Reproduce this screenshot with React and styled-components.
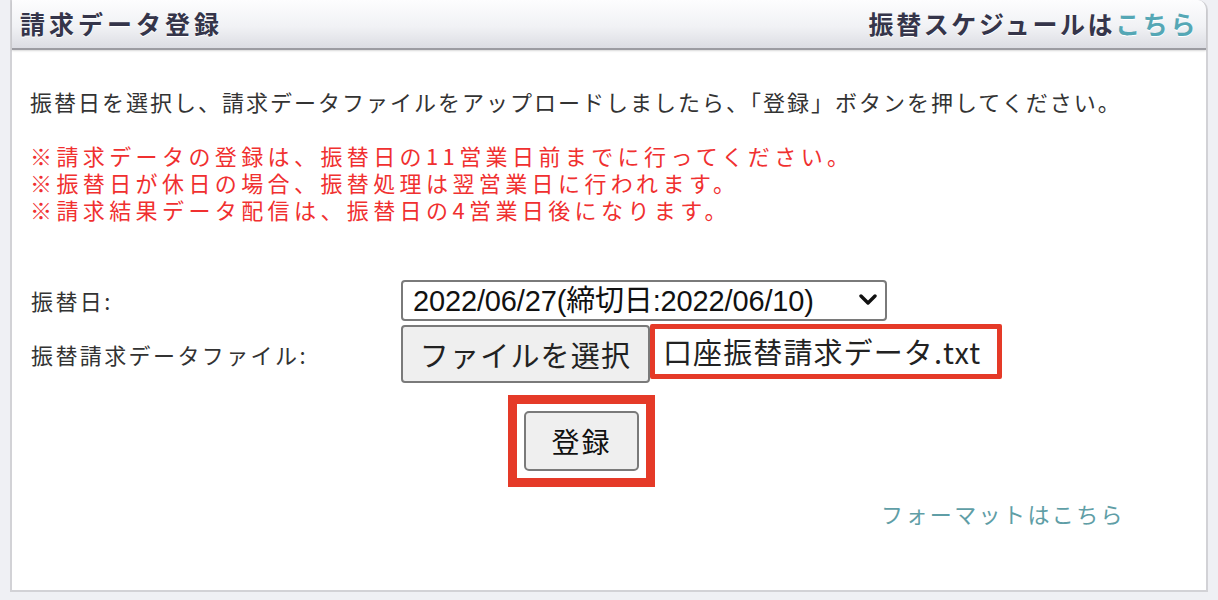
import React, { useState } from "react";
import styled, { createGlobalStyle } from "styled-components";

const GlobalStyle = createGlobalStyle`
  html, body {
    margin: 0;
    padding: 0;
    background: #eff0f4;
  }
  body {
    font-family: "Noto Sans CJK JP", "Liberation Sans", sans-serif;
    color: #333;
  }
`;

const Page = styled.div`
  padding: 0 10px;
  width: 1198px;
`;

const Panel = styled.section`
  background: #fff;
  border: 2px solid #d2d2d6;
  border-top: none;
  border-top-right-radius: 10px;
  height: 592px;
  box-sizing: border-box;
`;

const Header = styled.header`
  display: flex;
  align-items: center;
  justify-content: space-between;
  height: 50px;
  box-sizing: border-box;
  padding: 0 8px 2px 8px;
  background: linear-gradient(#fdfdfe 0%, #f1f2f5 55%, #dcdde3 100%);
  border-bottom: 2px solid #9c9ca2;
  border-top-right-radius: 10px;
  box-shadow: 0 1px 2px rgba(0, 0, 0, 0.15);
  font-size: 25px;
  font-weight: bold;
  color: #35354a;
  text-shadow: 0 1px 0 #fff;
`;

const Title = styled.h2`
  margin: 0;
  font-size: inherit;
  letter-spacing: 4px;
`;

const HeaderLink = styled.a`
  color: #35354a;
  text-decoration: none;
  letter-spacing: 2.6px;
  span {
    color: #55a7b5;
  }
`;

const Body = styled.div`
  padding: 38px 18px 0 18px;
  font-size: 22px;
  line-height: 27px;
`;

const Lead = styled.p`
  margin: 0 0 27px 0;
  color: #333;
  letter-spacing: 2px;
`;

const Notes = styled.div`
  color: #f03030;
  letter-spacing: 4.4px;
`;

const Form = styled.div`
  display: grid;
  grid-template-columns: 371px auto;
  row-gap: 4px;
  align-items: center;
  margin-top: 57px;
  letter-spacing: 2.4px;
`;

const Label = styled.label`
  color: #333;
  padding-left: 1px;
`;

const SelectWrap = styled.div`
  position: relative;
  width: 486px;
`;

const Select = styled.select`
  appearance: none;
  width: 100%;
  height: 41px;
  box-sizing: border-box;
  padding: 0 0 0 10px;
  border: 2px solid #7a7a7a;
  border-radius: 4px;
  background: #fff;
  color: #111;
  font-family: "Liberation Sans", "Noto Sans CJK JP", sans-serif;
  font-size: 29px;
  letter-spacing: -0.15px;
`;

const Chevron = styled.svg`
  position: absolute;
  right: 10px;
  top: 13px;
  width: 18px;
  height: 14px;
  pointer-events: none;
`;

const FileRow = styled.div`
  display: flex;
  align-items: flex-start;
`;

const FileButton = styled.button`
  width: 249px;
  height: 58px;
  box-sizing: border-box;
  border: 2px solid #7a7a7a;
  border-radius: 4px;
  background: #efefef;
  color: #222;
  font-family: "Noto Sans CJK JP", sans-serif;
  font-size: 29px;
  letter-spacing: 1.2px;
  padding: 0;
`;

const FileName = styled.div`
  display: flex;
  align-items: center;
  width: 352px;
  height: 55px;
  box-sizing: border-box;
  margin-top: -1px;
  padding-left: 8px;
  border: 5px solid #e53a28;
  border-radius: 2px;
  color: #222;
  font-size: 29px;
  letter-spacing: 1.1px;
`;

const Actions = styled.div`
  display: flex;
  margin-top: 12px;
  padding-left: 478px;
`;

const Highlight = styled.div`
  border: 9px solid #e53a28;
  padding: 7px;
  line-height: 0;
`;

const SubmitButton = styled.button`
  width: 115px;
  height: 60px;
  box-sizing: border-box;
  border: 2px solid #7a7a7a;
  border-radius: 5px;
  background: #efefef;
  color: #111;
  font-family: "Noto Sans CJK JP", sans-serif;
  font-size: 28px;
  letter-spacing: 2px;
  padding: 0;
`;

const FormatLink = styled.div`
  margin-top: 13px;
  padding-right: 63px;
  text-align: right;
  letter-spacing: 2.4px;
  a {
    color: #5f9ea6;
    text-decoration: none;
  }
`;

const App = () => {
  const [date, setDate] = useState("2022-06-27");

  return (
    <>
      <GlobalStyle />
      <Page>
        <Panel>
          <Header>
            <Title>請求データ登録</Title>
            <HeaderLink href="#">
              振替スケジュールは<span>こちら</span>
            </HeaderLink>
          </Header>
          <Body>
            <Lead>
              振替日を選択し、請求データファイルをアップロードしましたら、「登録」ボタンを押してください。
            </Lead>
            <Notes>
              ※請求データの登録は、振替日の11営業日前までに行ってください。
              <br />
              ※振替日が休日の場合、振替処理は翌営業日に行われます。
              <br />
              ※請求結果データ配信は、振替日の4営業日後になります。
            </Notes>
            <Form>
              <Label>振替日:</Label>
              <SelectWrap>
                <Select value={date} onChange={(e) => setDate(e.target.value)}>
                  <option value="2022-06-27">2022/06/27(締切日:2022/06/10)</option>
                </Select>
                <Chevron viewBox="0 0 18 14">
                  <path
                    d="M2 3 L9 10 L16 3"
                    fill="none"
                    stroke="#111"
                    strokeWidth="3.4"
                    strokeLinecap="round"
                    strokeLinejoin="round"
                  />
                </Chevron>
              </SelectWrap>
              <Label>振替請求データファイル:</Label>
              <FileRow>
                <FileButton type="button">ファイルを選択</FileButton>
                <FileName>口座振替請求データ.txt</FileName>
              </FileRow>
            </Form>
            <Actions>
              <Highlight>
                <SubmitButton type="button">登録</SubmitButton>
              </Highlight>
            </Actions>
            <FormatLink>
              <a href="#">フォーマットはこちら</a>
            </FormatLink>
          </Body>
        </Panel>
      </Page>
    </>
  );
};

export default App;
